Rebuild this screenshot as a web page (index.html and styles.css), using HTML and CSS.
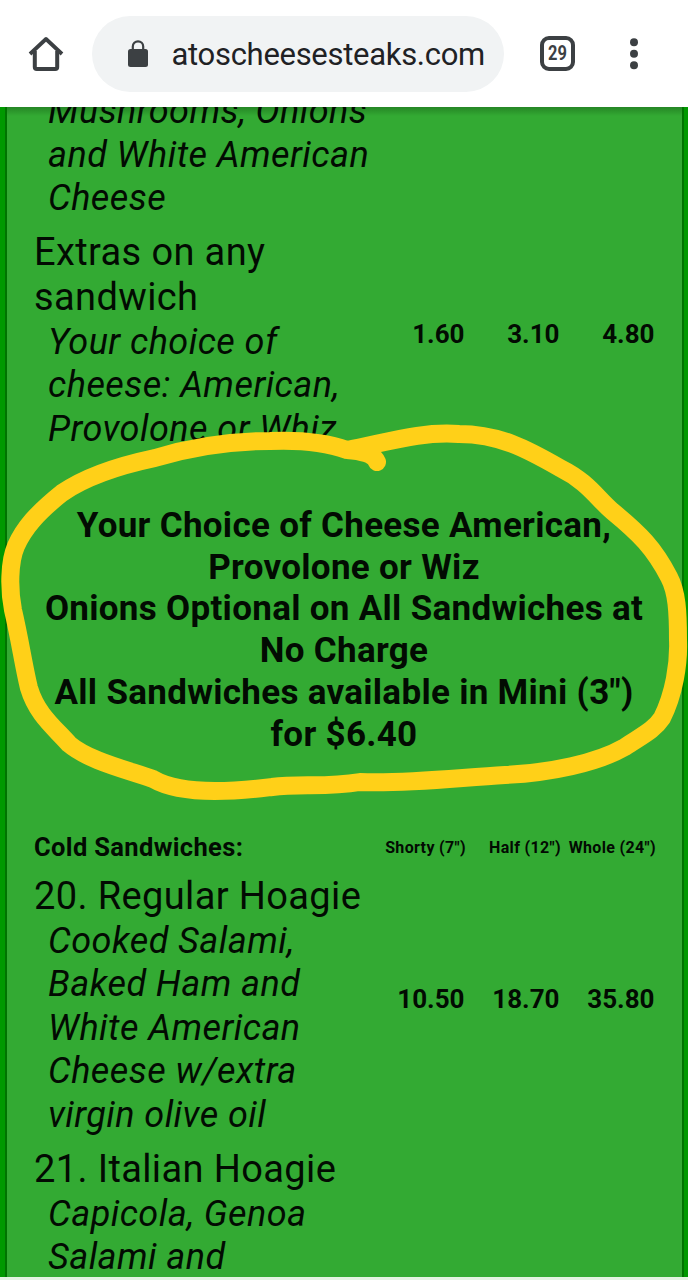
FILE: index.html
```
<!DOCTYPE html>
<html lang="en">
<head>
    <meta charset="UTF-8">
    <meta name="viewport" content="width=device-width, initial-scale=1.0">
    <title>Menu</title>
    <link rel="stylesheet" href="styles.css">
</head>
<body>
    <header class="toolbar">
        <svg class="home" width="36" height="36" viewBox="0 0 36 36" fill="none" stroke="#3c4043" stroke-linejoin="round">
            <path d="M2 18 L18 3 L34 18" stroke-width="3.8"/>
            <path d="M6.8 15 V31 Q6.8 33 8.8 33 H27.2 Q29.2 33 29.2 31 V15" stroke-width="4"/>
        </svg>
        <div class="address">
            <svg class="lock" width="22" height="28" viewBox="0 0 22 28">
                <rect x="1" y="9" width="20" height="18" rx="2.5" fill="#3c4043"/>
                <path d="M5.8 10 V6.5 A5.2 5.2 0 0 1 16.2 6.5 V10" fill="none" stroke="#3c4043" stroke-width="2.2"/>
            </svg>
            <span class="url">atoscheesesteaks.com</span>
        </div>
        <div class="tabs"><span class="count">29</span></div>
        <svg class="dots" width="10" height="32" viewBox="0 0 10 32" fill="#3c4043">
            <circle cx="5" cy="4.2" r="4"/>
            <circle cx="5" cy="15.8" r="4"/>
            <circle cx="5" cy="27.2" r="4"/>
        </svg>
    </header>

    <main class="page">
        <div class="menu">
            <div class="item">
                <div class="desc">Mushrooms, Onions<br>and White American<br>Cheese</div>
            </div>
            <div class="item">
                <div>
                    <div class="name">Extras on any<br>sandwich</div>
                    <div class="desc">Your choice of<br>cheese: American,<br>Provolone or Whiz</div>
                </div>
                <div class="price">1.60</div>
                <div class="price">3.10</div>
                <div class="price">4.80</div>
            </div>

            <div class="notice">Your Choice of Cheese American,<br>Provolone or Wiz<br>Onions Optional on All Sandwiches at<br>No Charge<br>All Sandwiches available in Mini (3")<br>for $6.40</div>

            <div class="item heading">
                <div class="title">Cold Sandwiches:</div>
                <div class="size">Shorty (7")</div>
                <div class="size">Half (12")</div>
                <div class="size">Whole (24")</div>
            </div>
            <div class="item">
                <div>
                    <div class="name">20. Regular Hoagie</div>
                    <div class="desc">Cooked Salami,<br>Baked Ham and<br>White American<br>Cheese w/extra<br>virgin olive oil</div>
                </div>
                <div class="price">10.50</div>
                <div class="price">18.70</div>
                <div class="price">35.80</div>
            </div>
            <div class="item">
                <div>
                    <div class="name">21. Italian Hoagie</div>
                    <div class="desc">Capicola, Genoa<br>Salami and</div>
                </div>
            </div>
        </div>
    </main>

    <!-- hand drawn circle around the notice -->
    <svg class="marker" width="688" height="400" viewBox="0 420 688 400">
        <path d="M377 462 C374 454 361 451 347 450 C325 442 295 440 270 441 C225 441 188 448 155 458 C122 465 88 475 62 493 C37 513 24 528 16 546 C9 562 9 590 13 610 C20 640 24 668 29 688 C37 715 55 728 69 744 C89 761 128 770 153 779 C165 786 185 791 215 791 C240 791 255 789 272 787 C300 783 325 788 360 782 C405 784 455 778 505 775 C550 773 597 763 625 747 C643 735 654 730 662 718 C674 694 679 664 678 640 C678 612 677 592 669 577 C654 548 640 534 612 511 C596 497 588 482 560 468 C527 449 499 434 459 434 C420 431 385 443 347 450"/>
    </svg>
</body>
</html>
```

FILE: styles.css
```
* {
  box-sizing: border-box;
}
body {
  margin: 0;
  height: 1280px;
  overflow: hidden;
  position: relative;
  display: flex;
  flex-direction: column;
  font-family: Roboto, sans-serif;
  background-color: #e4f3e2;
  color: #020b02;
}
.toolbar {
  display: flex;
  align-items: center;
  flex: none;
  height: 107px;
  padding-left: 28px;
  background-color: #fff;
}
.address {
  display: flex;
  align-items: center;
  width: 412px;
  height: 76px;
  margin-left: 28px;
  padding-left: 35px;
  border-radius: 38px;
  background-color: #f1f3f4;
}
.url {
  margin: 2px 0 0 22.5px;
  font-size: 31px;
  letter-spacing: -0.3px;
  color: #202124;
  white-space: nowrap;
}
.tabs {
  width: 35px;
  height: 35px;
  margin-left: 36px;
  border: 4px solid #3c4043;
  border-radius: 9px;
  font-size: 20px;
  font-weight: bold;
  line-height: 27px;
  text-align: center;
  color: #3c4043;
}
.count {
  display: inline-block;
  transform: scaleX(0.82);
}
.dots {
  margin-left: 54px;
}
.page {
  height: 1169.5px;
  overflow: hidden;
  padding: 0 4px 0 5px;
  background-color: #009900;
}
.menu {
  height: 100%;
  overflow: hidden;
  padding-left: 27px;
  border: solid #007400;
  border-width: 0 2px;
  background: linear-gradient(rgba(0, 40, 0, 0.28), rgba(0, 40, 0, 0) 9px) #33aa33;
}
.item {
  display: grid;
  grid-template-columns: 335.5px 95px 95px 95px;
  align-items: center;
  margin-bottom: 9px;
  white-space: nowrap;
}
.item:first-child {
  margin-top: -17px;
}
.name {
  font-size: 38px;
  line-height: 45px;
  letter-spacing: 0.38px;
}
.desc {
  padding-left: 14px;
  font-size: 36px;
  font-style: italic;
  line-height: 43.6px;
  letter-spacing: 0.45px;
}
.name + .desc {
  margin-top: 1px;
}
.price {
  padding-bottom: 13px;
  font-size: 26px;
  font-weight: bold;
  line-height: 30px;
  text-align: right;
}
.notice {
  margin: 53.3px 28px 76.7px 0;
  font-size: 35px;
  font-weight: bold;
  line-height: 41.75px;
  letter-spacing: 0.3px;
  text-align: center;
  white-space: nowrap;
}
.heading {
  margin-bottom: 11.6px;
}
.title {
  font-size: 25.5px;
  font-weight: bold;
  line-height: 30px;
  letter-spacing: 0.35px;
}
.size {
  margin-right: -1.5px;
  font-size: 16px;
  font-weight: bold;
  letter-spacing: 0.35px;
  text-align: right;
}
.marker {
  position: absolute;
  left: 0;
  top: 420px;
}
.marker path {
  fill: none;
  stroke: #ffd018;
  stroke-width: 18px;
  stroke-linecap: round;
  stroke-linejoin: round;
}
```
